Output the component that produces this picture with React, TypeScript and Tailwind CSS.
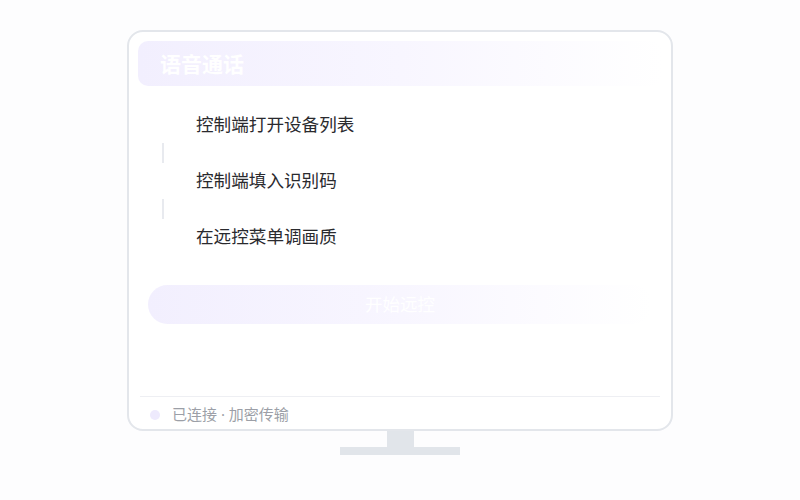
const steps = ["控制端打开设备列表", "控制端填入识别码", "在远控菜单调画质"];

export default function App() {
  return (
    <div
      className="w-[800px] h-[500px] bg-[#fdfdfe] flex flex-col items-center pt-[30px]"
      style={{ fontFamily: '"Noto Sans", "Noto Sans CJK SC", sans-serif' }}
    >
      {/* screen */}
      <div className="w-[546px] h-[401px] rounded-[16px] border-2 border-[#e3e6eb] bg-white flex flex-col px-[9px] pt-[9px]">
        <div className="h-[45px] rounded-[10px] bg-gradient-to-r from-[#f2effe] via-[#f8f6ff] to-transparent flex items-center px-[22px] pt-[2px]">
          <span className="text-[21px] font-bold text-white leading-none">语音通话</span>
        </div>

        <div className="flex flex-col mt-[21px] pl-[13px]">
          {steps.map((s, i) => (
            <div key={s} className="flex flex-col">
              {i > 0 && (
                <div className="w-[24px] h-[20px] flex justify-center">
                  <div className="w-[2px] h-full bg-[#e8eaef]" />
                </div>
              )}
              <div className="h-[36px] flex items-center">
                <div className="w-[24px] flex justify-center">
                  <div className="w-[22px] h-[22px] rounded-full bg-white" />
                </div>
                <span className="ml-[21px] text-[17.6px] text-[#2a2a2e] leading-none">{s}</span>
              </div>
            </div>
          ))}
        </div>

        <button className="mt-[30px] mx-[10px] h-[39px] rounded-full bg-gradient-to-r from-[#f2effe] via-[#f8f6ff] to-transparent text-white text-[17.5px] leading-none flex items-center justify-center">
          开始远控
        </button>

        <div className="flex-1" />

        <div className="border-t border-[#eeeff3] mx-[2px] h-[33px] flex items-center px-[10px] pt-[3px]">
          <div className="w-[10px] h-[10px] rounded-full bg-[#eeeafd]" />
          <span className="ml-[12px] text-[15px] text-[#9c9fa7] leading-none">已连接 · 加密传输</span>
        </div>
      </div>

      {/* stand */}
      <div className="w-[27px] h-[16px] bg-[#e1e5ea]" />
      <div className="w-[120px] h-[8px] bg-[#e1e5ea]" />
    </div>
  );
}
